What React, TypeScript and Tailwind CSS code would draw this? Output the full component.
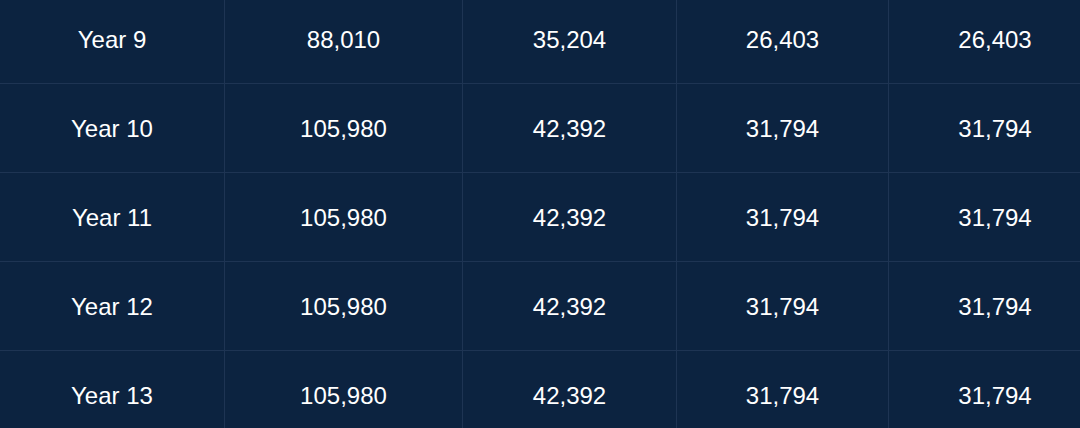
const rows = [
  ["Year 9", "88,010", "35,204", "26,403", "26,403"],
  ["Year 10", "105,980", "42,392", "31,794", "31,794"],
  ["Year 11", "105,980", "42,392", "31,794", "31,794"],
  ["Year 12", "105,980", "42,392", "31,794", "31,794"],
  ["Year 13", "105,980", "42,392", "31,794", "31,794"],
];

export default function App() {
  return (
    <div className="w-[1080px] h-[428px] overflow-hidden bg-[#0c2340]" style={{ fontFamily: '"Liberation Sans", Arial, sans-serif' }}>
      <div className="-mt-[5px] w-[1101px]">
        {rows.map((r, i) => (
          <div key={i} className="grid grid-cols-[225px_238px_214px_212px_212px] h-[89px] border-b border-[#1e3453]">
            {r.map((c, j) => (
              <div
                key={j}
                className={`flex items-center justify-center pt-[2px] text-[24px] text-white ${j < 4 ? "border-r border-[#1e3453]" : ""}`}
              >
                {c}
              </div>
            ))}
          </div>
        ))}
      </div>
    </div>
  );
}
